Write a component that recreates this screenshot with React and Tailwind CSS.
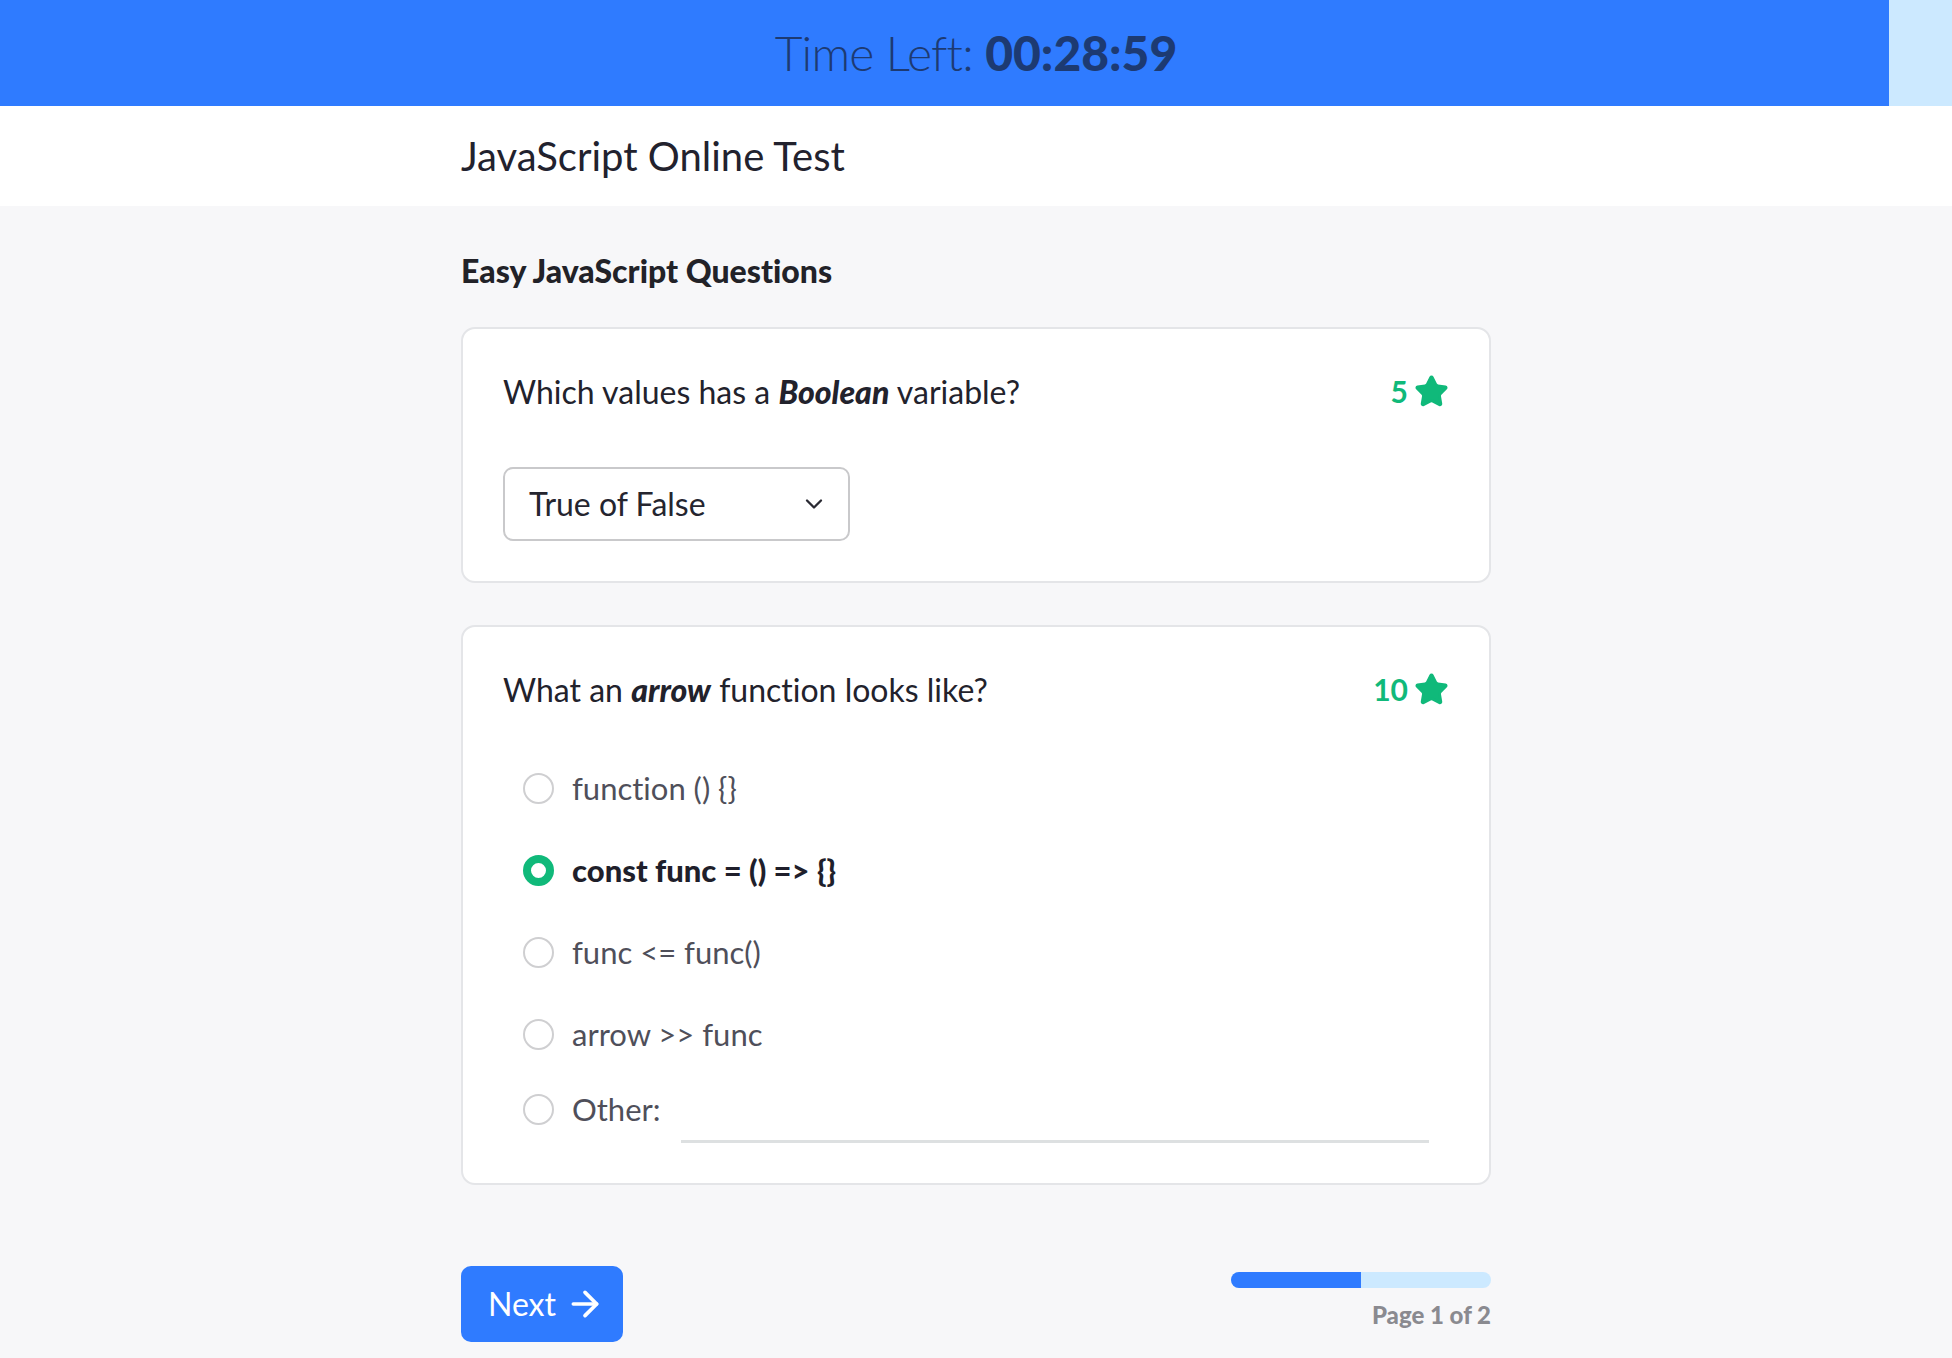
import React from "react";
import { ChevronDown, Star, ArrowRight } from "lucide-react";

// Answer choices for the arrow function question
const OPTIONS = [
  { label: "function () {}", selected: false },
  { label: "const func = () => {}", selected: true },
  { label: "func <= func()", selected: false },
  { label: "arrow >> func", selected: false },
];

const Points = ({ value }) => (
  <div className="flex items-center gap-[6px] text-[#10b97a]">
    <span className="text-[30px] font-bold leading-[45px]">{value}</span>
    <Star size={35} fill="currentColor" strokeWidth={2} strokeLinejoin="round" />
  </div>
);

const Radio = ({ checked }) =>
  checked ? (
    <span className="block h-[31px] w-[31px] shrink-0 rounded-full border-[8px] border-[#10b97a] bg-white" />
  ) : (
    <span className="block h-[31px] w-[31px] shrink-0 rounded-full border-2 border-[#cfcfd1] bg-white" />
  );

const App = () => {
  return (
    <div className="min-h-screen bg-[#f7f7f9] font-['Lato',sans-serif] text-[#22222c] [font-variant-ligatures:none]">
      {/* Timer bar */}
      <div className="relative flex h-[106px] items-center justify-center bg-[#cce9ff]">
        <div className="absolute inset-y-0 left-0 w-[96.77%] bg-[#2f7bff]" />
        <div className="relative text-[48px] leading-none text-[#1d3a72]">
          <span className="font-light tracking-[-0.8px]">Time Left: </span>
          <span className="font-black">00:28:59</span>
        </div>
      </div>

      {/* Title */}
      <div className="bg-white">
        <div className="mx-auto flex h-[100px] max-w-[1030px] items-center">
          <h1 className="text-[40px] leading-none text-[#22222e]">JavaScript Online Test</h1>
        </div>
      </div>

      {/* Questions */}
      <div className="mx-auto max-w-[1030px] pt-[42px] pb-10">
        <h2 className="text-[32px] font-black leading-[45px] text-[#222228]">
          Easy JavaScript Questions
        </h2>

        <div className="mt-[34px] rounded-[14px] border-2 border-[#e4e5e8] bg-white p-10">
          <div className="flex items-center justify-between">
            <p className="text-[32px] leading-[45px]">
              Which values has a <b className="italic font-black">Boolean</b> variable?
            </p>
            <Points value="5" />
          </div>
          <div className="mt-[53px] flex h-[74px] w-[347px] items-center justify-between rounded-[10px] border-2 border-[#c9c9cb] pl-6 pr-5">
            <span className="text-[32px] text-[#25252f]">True of False</span>
            <ChevronDown size={28} strokeWidth={2} className="text-[#2a2a33]" />
          </div>
        </div>

        <div className="mt-[42px] rounded-[14px] border-2 border-[#e4e5e8] bg-white p-10">
          <div className="flex items-center justify-between">
            <p className="text-[32px] leading-[45px]">
              What an <b className="italic font-black">arrow</b> function looks like?
            </p>
            <Points value="10" />
          </div>
          <div className="mt-[35px] flex flex-col px-5">
            {OPTIONS.map((opt) => (
              <label key={opt.label} className="flex h-[82px] items-center gap-[18px]">
                <Radio checked={opt.selected} />
                <span
                  className={
                    opt.selected
                      ? "text-[31px] font-black text-[#1f1f2b]"
                      : "text-[31px] text-[#4f4f5a]"
                  }
                >
                  {opt.label}
                </span>
              </label>
            ))}
            <label className="flex h-[68px] items-center gap-[18px]">
              <Radio checked={false} />
              <span className="text-[31px] text-[#4f4f5a]">Other:</span>
              <input
                type="text"
                className="ml-[2px] h-full flex-1 border-b-[3px] border-[#dde0e1] bg-transparent text-[30px] outline-none"
              />
            </label>
          </div>
        </div>

        {/* Footer nav */}
        <div className="mt-[81px] flex items-start justify-between">
          <button className="flex h-[76px] items-center gap-[9px] rounded-[10px] bg-[#2f7bff] pl-[27px] pr-[18px] text-[32px] text-white">
            Next
            <ArrowRight size={40} strokeWidth={2.2} />
          </button>
          <div className="mt-[6px] flex flex-col items-end">
            <div className="h-4 w-[260px] overflow-hidden rounded-full bg-[#cce9ff]">
              <div className="h-full w-1/2 bg-[#2f7bff]" />
            </div>
            <span className="mt-[9px] text-[24px] font-black leading-9 text-[#8a8a90]">
              Page 1 of 2
            </span>
          </div>
        </div>
      </div>
    </div>
  );
};

export default App;
